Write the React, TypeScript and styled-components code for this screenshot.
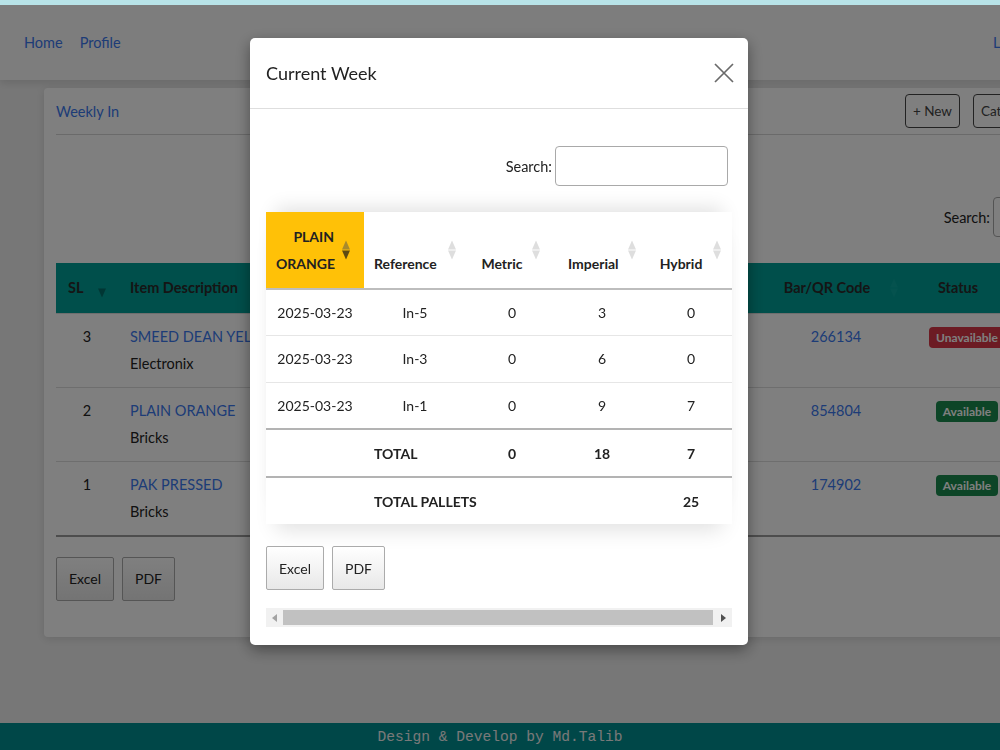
import React from 'react';
import styled, { createGlobalStyle } from 'styled-components';

const GlobalStyle = createGlobalStyle`
  html, body { margin: 0; padding: 0; }
  body {
    width: 1000px;
    height: 750px;
    overflow: hidden;
    font-family: Lato, 'Open Sans', sans-serif;
    background: #efefef;
    color: #333;
  }
`;

const LINK = '#3a78ee';

const Page = styled.div`
  width: 1000px;
  height: 750px;
  display: flex;
  flex-direction: column;
  overflow: hidden;
`;

const TopStrip = styled.div`
  position: relative;
  z-index: 20;
  height: 5px;
  flex-shrink: 0;
  background: #b8e3e8;
`;

const NavBar = styled.nav`
  width: 1061px;
  height: 75px;
  flex-shrink: 0;
  box-sizing: border-box;
  padding: 0 24px;
  display: flex;
  align-items: center;
  justify-content: space-between;
  background: #fafafa;
  box-shadow: 0 3px 8px rgba(0, 0, 0, 0.12);
`;

const NavLinks = styled.div`
  display: flex;
  gap: 17px;
`;

const NavLink = styled.a`
  font-size: 14.5px;
  color: ${LINK};
  text-decoration: none;
`;

const Main = styled.main`
  flex: 1;
  padding: 8px 0 0 44px;
`;

const Card = styled.section`
  width: 1111px;
  box-sizing: border-box;
  padding: 0 12px 36px;
  background: #fff;
  border-radius: 4px;
  box-shadow: 0 2px 10px rgba(0, 0, 0, 0.12);
`;

const CardHeader = styled.div`
  display: flex;
  align-items: center;
  justify-content: space-between;
  padding: 6px 100px 6px 0;
  border-bottom: 1px solid #d4d4d4;
`;

const CardTitle = styled.a`
  font-size: 14.5px;
  color: ${LINK};
`;

const HeaderActions = styled.div`
  display: flex;
  gap: 13px;
`;

const OutlineButton = styled.button`
  height: 34px;
  padding: 0 7px;
  font: 13.5px Lato, sans-serif;
  color: #444;
  background: transparent;
  border: 1px solid #444;
  border-radius: 4px;
`;

const FilterRow = styled.div<{ $top: number; $right?: number }>`
  display: flex;
  align-items: center;
  justify-content: flex-end;
  gap: 3px;
  margin-top: ${({ $top }) => $top}px;
  padding-right: ${({ $right }) => $right ?? 0}px;
`;

const FilterLabel = styled.label`
  font-size: 14.5px;
  color: #222;
`;

const FilterInput = styled.input<{ $w: number }>`
  width: ${({ $w }) => $w}px;
  height: 40px;
  box-sizing: border-box;
  border: 1px solid #a9a9a9;
  border-radius: 4px;
  background: #fff;
`;

const BgTable = styled.table`
  width: 1087px;
  margin-top: 26px;
  table-layout: fixed;
  border-collapse: collapse;
  font-size: 14.5px;
  border-bottom: 2px solid #9a9a9a;
`;

const BgHead = styled.th<{ $w: number; $align?: string }>`
  position: relative;
  width: ${({ $w }) => $w}px;
  height: 50px;
  box-sizing: border-box;
  padding: 0 28px 0 ${({ $align }) => ($align === 'left' ? 12 : 10)}px;
  text-align: ${({ $align }) => $align ?? 'center'};
  font-weight: 700;
  color: #2a2a2a;
  background: #009e96;
`;

const BgCell = styled.td<{ $align?: string }>`
  vertical-align: top;
  padding: 9px 12px 10px;
  line-height: 27px;
  text-align: ${({ $align }) => $align ?? 'center'};
  color: #222;
  border-top: 1px solid #dcdcdc;
  white-space: nowrap;
  overflow: hidden;
`;

const ItemLink = styled.div`
  color: ${LINK};
`;

const Badge = styled.span<{ $ok: boolean }>`
  display: inline-block;
  padding: 2px 7px;
  font-size: 12px;
  line-height: 17px;
  font-weight: 700;
  color: #fff;
  border-radius: 4px;
  background: ${({ $ok }) => ($ok ? '#1a8a4e' : '#d93646')};
`;

const ButtonRow = styled.div<{ $top: number }>`
  display: flex;
  gap: 8px;
  margin-top: ${({ $top }) => $top}px;
`;

const ExportButton = styled.button`
  height: 44px;
  padding: 0 12px;
  font: 14px Lato, sans-serif;
  color: #222;
  background: linear-gradient(#ffffff, #e8e8e8);
  border: 1px solid #ababab;
  border-radius: 2px;
`;

const Footer = styled.footer`
  height: 27px;
  flex-shrink: 0;
  display: flex;
  align-items: center;
  justify-content: center;
  background: #008e90;
  color: #f2f2f2;
  font: 14.6px 'Liberation Mono', 'DejaVu Sans Mono', monospace;
`;

const Overlay = styled.div`
  position: fixed;
  inset: 0;
  z-index: 10;
  display: flex;
  justify-content: center;
  align-items: flex-start;
  padding: 38px 2px 0 0;
  background: rgba(0, 0, 0, 0.5);
`;

const Modal = styled.div`
  width: 498px;
  background: #fff;
  border-radius: 5px;
  box-shadow: 0 5px 15px rgba(0, 0, 0, 0.4);
`;

const ModalHeader = styled.div`
  height: 70px;
  display: flex;
  align-items: center;
  justify-content: space-between;
  padding: 0 14px 0 16px;
  border-bottom: 1px solid #dedede;
`;

const ModalTitle = styled.h5`
  margin: 0;
  font-size: 18px;
  font-weight: 400;
  color: #222;
`;

const CloseButton = styled.button`
  display: flex;
  padding: 0;
  border: 0;
  background: none;
`;

const ModalBody = styled.div`
  padding: 0 16px 18px;
`;

const TableShell = styled.div`
  margin-top: 26px;
  overflow: hidden;
  box-shadow: 0 -14px 18px -10px rgba(0, 0, 0, 0.12), 0 16px 20px -10px rgba(0, 0, 0, 0.12);
`;

const WeekTable = styled.table`
  width: 470px;
  table-layout: fixed;
  border-collapse: collapse;
  font-size: 14px;
  color: #222;
`;

const HeadCell = styled.th<{ $w: number; $active?: boolean }>`
  position: relative;
  width: ${({ $w }) => $w}px;
  box-sizing: border-box;
  padding: 11px 30px 11px 10px;
  line-height: 27px;
  vertical-align: bottom;
  text-align: ${({ $active }) => ($active ? 'right' : 'center')};
  font-weight: 700;
  background: ${({ $active }) => ($active ? '#ffc107' : '#fff')};
  border-bottom: 2px solid #bdbdbd;
`;

const SortMark = styled.svg<{ $right: number }>`
  position: absolute;
  right: ${({ $right }) => $right}px;
  top: 50%;
  transform: translateY(-50%);
`;

const DataRow = styled.tr`
  & > td {
    border-top: 1px solid #e6e6e6;
  }
`;

const DataCell = styled.td`
  height: 45.3px;
  padding: 0 10px;
  text-align: center;
`;

const TotalRow = styled.tr`
  & > td {
    border-top: 2px solid #b3b3b3;
  }
`;

const TotalCell = styled.td<{ $label?: boolean }>`
  height: 46.3px;
  padding: 0 10px;
  font-weight: 700;
  white-space: nowrap;
  text-align: ${({ $label }) => ($label ? 'left' : 'center')};
`;

const Scrollbar = styled.div`
  display: flex;
  align-items: center;
  height: 19px;
  margin-top: 18px;
  background: #f1f1f1;
`;

const ScrollArrow = styled.div`
  width: 17px;
  height: 19px;
  display: flex;
  align-items: center;
  justify-content: center;
`;

const ScrollThumb = styled.div`
  flex: 1;
  height: 15px;
  margin-right: 2px;
  background: #c1c1c1;
`;

const SortIcon = ({ up, down, right = 12 }: { up: string; down: string; right?: number }) => (
  <SortMark $right={right} width="8" height="19" viewBox="0 0 8 19">
    <path d="M4 0 L8 9 L0 9 Z" fill={up} />
    <path d="M0 10 L8 10 L4 19 Z" fill={down} />
  </SortMark>
);

const bgRows = [
  { sl: 3, name: 'SMEED DEAN YELLOW', cat: 'Electronix', code: '266134', ok: false },
  { sl: 2, name: 'PLAIN ORANGE', cat: 'Bricks', code: '854804', ok: true },
  { sl: 1, name: 'PAK PRESSED', cat: 'Bricks', code: '174902', ok: true },
];

const weekRows = [
  { date: '2025-03-23', ref: 'In-5', metric: 0, imperial: 3, hybrid: 0 },
  { date: '2025-03-23', ref: 'In-3', metric: 0, imperial: 6, hybrid: 0 },
  { date: '2025-03-23', ref: 'In-1', metric: 0, imperial: 9, hybrid: 7 },
];

export default function App() {
  const totals = weekRows.reduce(
    (t, r) => ({ metric: t.metric + r.metric, imperial: t.imperial + r.imperial, hybrid: t.hybrid + r.hybrid }),
    { metric: 0, imperial: 0, hybrid: 0 }
  );
  const pallets = totals.metric + totals.imperial + totals.hybrid;

  return (
    <Page>
      <GlobalStyle />
      <TopStrip />
      <NavBar>
        <NavLinks>
          <NavLink>Home</NavLink>
          <NavLink>Profile</NavLink>
        </NavLinks>
        <NavLink>Logout</NavLink>
      </NavBar>

      <Main>
        <Card>
          <CardHeader>
            <CardTitle>Weekly In</CardTitle>
            <HeaderActions>
              <OutlineButton>+ New</OutlineButton>
              <OutlineButton>Category</OutlineButton>
            </HeaderActions>
          </CardHeader>

          <FilterRow $top={62}>
            <FilterLabel>Search:</FilterLabel>
            <FilterInput $w={150} />
          </FilterRow>

          <BgTable>
            <thead>
              <tr>
                <BgHead $w={62} $align="left">
                  SL
                  <SortIcon up="transparent" down="#006d68" right={12} />
                </BgHead>
                <BgHead $w={232} $align="left">Item Description</BgHead>
                <BgHead $w={220}>Unit</BgHead>
                <BgHead $w={190}>Stock</BgHead>
                <BgHead $w={152}>
                  Bar/QR Code
                  <SortIcon up="#0aa59d" down="#0aa59d" right={14} />
                </BgHead>
                <BgHead $w={110}>Status</BgHead>
                <BgHead $w={121}>Action</BgHead>
              </tr>
            </thead>
            <tbody>
              {bgRows.map((r) => (
                <tr key={r.sl}>
                  <BgCell>{r.sl}</BgCell>
                  <BgCell $align="left">
                    <ItemLink>{r.name}</ItemLink>
                    <div>{r.cat}</div>
                  </BgCell>
                  <BgCell />
                  <BgCell />
                  <BgCell>
                    <ItemLink>{r.code}</ItemLink>
                  </BgCell>
                  <BgCell>
                    <Badge $ok={r.ok}>{r.ok ? 'Available' : 'Unavailable'}</Badge>
                  </BgCell>
                  <BgCell />
                </tr>
              ))}
            </tbody>
          </BgTable>

          <ButtonRow $top={20}>
            <ExportButton>Excel</ExportButton>
            <ExportButton>PDF</ExportButton>
          </ButtonRow>
        </Card>
      </Main>

      <Footer>Design &amp; Develop by Md.Talib</Footer>

      <Overlay>
        <Modal>
          <ModalHeader>
            <ModalTitle>Current Week</ModalTitle>
            <CloseButton aria-label="Close">
              <svg width="20" height="20" viewBox="0 0 20 20">
                <path d="M1 1 L19 19 M19 1 L1 19" stroke="#6a6a6a" strokeWidth="1.7" />
              </svg>
            </CloseButton>
          </ModalHeader>
          <ModalBody>
            <FilterRow $top={37} $right={4}>
              <FilterLabel>Search:</FilterLabel>
              <FilterInput $w={173} />
            </FilterRow>

            <TableShell>
              <WeekTable>
                <thead>
                  <tr>
                    <HeadCell $w={98} $active>
                      PLAIN ORANGE
                      <SortIcon up="#a88a2c" down="#5e4a12" right={14} />
                    </HeadCell>
                    <HeadCell $w={102}>
                      Reference
                      <SortIcon up="#dedede" down="#dedede" right={10} />
                    </HeadCell>
                    <HeadCell $w={92}>
                      Metric
                      <SortIcon up="#dedede" down="#dedede" right={18} />
                    </HeadCell>
                    <HeadCell $w={88}>
                      Imperial
                      <SortIcon up="#dedede" down="#dedede" right={10} />
                    </HeadCell>
                    <HeadCell $w={90}>
                      Hybrid
                      <SortIcon up="#dedede" down="#dedede" right={15} />
                    </HeadCell>
                  </tr>
                </thead>
                <tbody>
                  {weekRows.map((r) => (
                    <DataRow key={r.ref}>
                      <DataCell>{r.date}</DataCell>
                      <DataCell>{r.ref}</DataCell>
                      <DataCell>{r.metric}</DataCell>
                      <DataCell>{r.imperial}</DataCell>
                      <DataCell>{r.hybrid}</DataCell>
                    </DataRow>
                  ))}
                </tbody>
                <tfoot>
                  <TotalRow>
                    <TotalCell />
                    <TotalCell $label>TOTAL</TotalCell>
                    <TotalCell>{totals.metric}</TotalCell>
                    <TotalCell>{totals.imperial}</TotalCell>
                    <TotalCell>{totals.hybrid}</TotalCell>
                  </TotalRow>
                  <TotalRow>
                    <TotalCell />
                    <TotalCell $label colSpan={3}>TOTAL PALLETS</TotalCell>
                    <TotalCell>{pallets}</TotalCell>
                  </TotalRow>
                </tfoot>
              </WeekTable>
            </TableShell>

            <ButtonRow $top={22}>
              <ExportButton>Excel</ExportButton>
              <ExportButton>PDF</ExportButton>
            </ButtonRow>

            <Scrollbar>
              <ScrollArrow>
                <svg width="5" height="8" viewBox="0 0 5 8">
                  <path d="M5 0 L0 4 L5 8 Z" fill="#a3a3a3" />
                </svg>
              </ScrollArrow>
              <ScrollThumb />
              <ScrollArrow>
                <svg width="5" height="8" viewBox="0 0 5 8">
                  <path d="M0 0 L5 4 L0 8 Z" fill="#505050" />
                </svg>
              </ScrollArrow>
            </Scrollbar>
          </ModalBody>
        </Modal>
      </Overlay>
    </Page>
  );
}
